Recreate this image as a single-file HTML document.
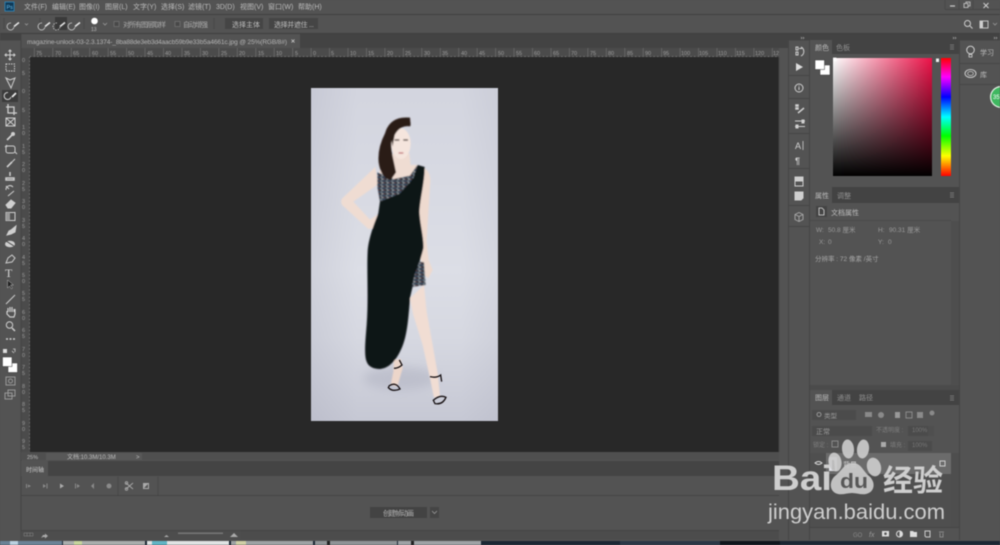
<!DOCTYPE html>
<html><head><meta charset="utf-8"><style>
html,body{margin:0;padding:0;background:#535353;width:1000px;height:545px;overflow:hidden}
svg{display:block;filter:blur(.55px)}
text{font-family:"Liberation Sans","Noto Sans CJK SC",sans-serif;fill:#bcbcbc;font-size:7px}
.d text{fill:#9c9c9c;font-size:5.5px}
.m text{fill:#9a9a9a;font-size:6.5px}
.i{fill:none;stroke:#cfcfcf;stroke-width:1}
.f{fill:#cfcfcf}
</style></head><body>
<svg width="1000" height="545" viewBox="0 0 1000 545" xmlns="http://www.w3.org/2000/svg">
<defs>
<linearGradient id="cw" x1="0" x2="1" y1="0" y2="0"><stop offset="0" stop-color="#fff"/><stop offset="1" stop-color="#ec1248"/></linearGradient>
<linearGradient id="cb" x1="0" x2="0" y1="0" y2="1"><stop offset="0" stop-color="#000" stop-opacity="0"/><stop offset="1" stop-color="#000"/></linearGradient>
<linearGradient id="hue" x1="0" x2="0" y1="0" y2="1"><stop offset="0" stop-color="#f00"/><stop offset=".16" stop-color="#f0f"/><stop offset=".33" stop-color="#00f"/><stop offset=".5" stop-color="#0ff"/><stop offset=".66" stop-color="#0f0"/><stop offset=".83" stop-color="#ff0"/><stop offset="1" stop-color="#f00"/></linearGradient>
<linearGradient id="bg" x1="0" x2="0" y1="0" y2="1"><stop offset="0" stop-color="#d3d5df"/><stop offset=".55" stop-color="#dcdee6"/><stop offset=".75" stop-color="#d6d8e1"/><stop offset="1" stop-color="#c6c8d4"/></linearGradient>
<linearGradient id="vg" x1="0" x2="1" y1="0" y2="0"><stop offset="0" stop-color="#8a8ca0" stop-opacity=".16"/><stop offset=".25" stop-color="#8a8ca0" stop-opacity="0"/><stop offset=".8" stop-color="#8a8ca0" stop-opacity="0"/><stop offset="1" stop-color="#8a8ca0" stop-opacity=".1"/></linearGradient>
<pattern id="seq" width="16" height="11" patternUnits="userSpaceOnUse"><rect width="16" height="11" fill="#2a3038"/><rect x="1" y="1" width="6" height="3" fill="#8fa0b0"/><rect x="9" y="0" width="6" height="3" fill="#3d5a78"/><rect x="4" y="6" width="6" height="3" fill="#c4c8cc"/><rect x="11" y="6" width="4" height="3" fill="#7a4a50"/></pattern>
<filter id="soft" x="-10%" y="-10%" width="120%" height="120%"><feGaussianBlur stdDeviation="1.6"/></filter>
<filter id="sh" x="-30%" y="-50%" width="160%" height="200%"><feGaussianBlur stdDeviation="14"/></filter>
</defs>

<rect width="1000" height="545" fill="#535353"/>
<!-- menu -->
<rect x="0" y="14" width="1000" height="1" fill="#404040"/>
<rect x="5" y="2" width="9" height="9" fill="#0e3a58" stroke="#2f8ac0" stroke-width=".8"/><text x="6.5" y="9" style="font-size:5.5px;fill:#6fc0ee">Ps</text>
<text x="24" y="9">文件(F)</text><text x="52" y="9">编辑(E)</text><text x="79" y="9">图像(I)</text><text x="105" y="9">图层(L)</text><text x="133" y="9">文字(Y)</text><text x="161" y="9">选择(S)</text><text x="188" y="9">滤镜(T)</text><text x="216" y="9">3D(D)</text><text x="240" y="9">视图(V)</text><text x="268" y="9">窗口(W)</text><text x="298" y="9">帮助(H)</text>
<path d="M945 0v9M959 0v9M973 0v9M945 9.5H1000" stroke="#474747" fill="none"/>
<path d="M950 6h5" stroke="#ccc" stroke-width="1.2"/><path d="M964 3.500h4v4h-4zM966 3.500v-1.500h4v4h-2" class="i" style="stroke-width:.8"/><path d="M983.500 3l5 5M988.500 3l-5 5" class="i"/>

<!-- options bar -->
<path d="M4 18v11M40 18v11M84 18v11M214 18v11" stroke="#474747"/>
<rect x="55" y="17" width="12" height="13" fill="#3a3a3a"/>
<g class="i" style="stroke-width:.8"><path d="M11 23a3.500 3.500 0 1 0 3 4"/>
<path d="M42 23a3.500 3.500 0 1 0 3 4"/>
<path d="M57 23a3.500 3.500 0 1 0 3 4" stroke-dasharray="1.500 1"/>
<path d="M72 23a3.500 3.500 0 1 0 3 4"/>
<path d="M25 23.500l1.500 1.500 1.500-1.500" style="stroke:#999"/></g>
<g stroke="#e4e4e4" stroke-width="1.600" fill="none"><path d="M14 26.500l5-4"/><path d="M45 26.500l5-4"/><path d="M60 26.500l5-4"/><path d="M75 26.500l5-4"/></g>
<circle cx="94.500" cy="21" r="3.300" fill="#fff"/><text x="91" y="31" style="font-size:5px">13</text>
<path d="M103 23l2 2 2-2" class="i" style="stroke:#999;stroke-width:.8"/>
<rect x="114" y="21.500" width="5" height="5" fill="#484848" stroke="#777" stroke-width=".7"/><text x="123" y="27" textLength="43" style="fill:#aaa">对所有图层取样</text>
<rect x="175" y="21.500" width="5" height="5" fill="#484848" stroke="#777" stroke-width=".7"/><text x="183" y="27" textLength="25" style="fill:#aaa">自动增强</text>
<rect x="225" y="18" width="38" height="11" fill="#454545"/><text x="232" y="27">选择主体</text>
<rect x="269" y="18" width="49" height="11" fill="#454545"/><text x="274" y="27" textLength="40">选择并遮住 ...</text>
<circle cx="967.500" cy="23.500" r="3" class="i"/><path d="M970 26l2.500 2.500" class="i"/>
<rect x="980" y="21" width="8" height="7" class="i" style="stroke-width:.9"/><rect x="980" y="21" width="3" height="7" class="f"/><path d="M993 23l2 2 2-2" class="i" style="stroke:#999;stroke-width:.8"/>

<!-- dark strips -->
<rect x="0" y="33" width="1000" height="1" fill="#3f3f3f"/>
<rect x="0" y="34" width="1000" height="6.500" fill="#434343"/>
<rect x="21" y="34" width="768" height="14" fill="#434343"/>
<rect x="21" y="34" width="279" height="14" fill="#535353"/>
<text x="27" y="44" textLength="260" style="font-size:6.500px;fill:#b4b4b4">magazine-unlock-03-2.3.1374-_8ba88de3eb3d4aacb59b9e33b5a4661c.jpg @ 25%(RGB/8#)</text>
<path d="M291.500 39.500l3 3M294.500 39.500l-3 3" stroke="#ccc" stroke-width=".8"/>
<path d="M3.500 36l1.500 1.500-1.500 1.500M6.500 36l1.500 1.500-1.500 1.500" stroke="#aaa" fill="none" stroke-width=".6"/>
<rect x="0" y="34" width="21" height="6.500" fill="#434343"/>

<!-- rulers -->
<rect x="21" y="48" width="758" height="9" fill="#4b4b4b"/>
<rect x="21" y="57" width="9" height="395" fill="#4b4b4b"/>
<path d="M30 56.500H779" stroke="#808080" stroke-width="1" stroke-dasharray="1 2.690"/>
<path d="M30 52.500H779" stroke="#6e6e6e" stroke-width="9" stroke-dasharray=".7 17.750" stroke-dashoffset="-4"/>
<g class="d">
<text x="36" y="55">75</text><text x="55" y="55">70</text><text x="73" y="55">65</text><text x="92" y="55">60</text><text x="110" y="55">55</text><text x="128" y="55">50</text><text x="147" y="55">45</text><text x="165" y="55">40</text><text x="184" y="55">35</text><text x="202" y="55">30</text><text x="221" y="55">25</text><text x="239" y="55">20</text><text x="258" y="55">15</text><text x="276" y="55">10</text><text x="295" y="55">5</text><text x="313" y="55">0</text><text x="331" y="55">5</text><text x="350" y="55">10</text><text x="368" y="55">15</text><text x="387" y="55">20</text><text x="405" y="55">25</text><text x="424" y="55">30</text><text x="442" y="55">35</text><text x="461" y="55">40</text><text x="479" y="55">45</text><text x="498" y="55">50</text><text x="516" y="55">55</text><text x="534" y="55">60</text><text x="553" y="55">65</text><text x="571" y="55">70</text><text x="590" y="55">75</text><text x="608" y="55">80</text><text x="627" y="55">85</text><text x="645" y="55">90</text><text x="663" y="55">95</text><text x="681" y="55">100</text><text x="699" y="55">105</text><text x="718" y="55">110</text><text x="736" y="55">115</text><text x="755" y="55">120</text><text x="773" y="55">12</text>
<text x="22" y="62">0</text><text x="22" y="75">5</text><text x="22" y="93">0</text><text x="22" y="112">5</text>
<text x="22" y="129">1</text><text x="22" y="135">0</text><text x="22" y="148">1</text><text x="22" y="154">5</text><text x="22" y="166">2</text><text x="22" y="172">0</text><text x="22" y="185">2</text><text x="22" y="191">5</text><text x="22" y="203">3</text><text x="22" y="209">0</text><text x="22" y="222">3</text><text x="22" y="228">5</text><text x="22" y="240">4</text><text x="22" y="246">0</text><text x="22" y="259">4</text><text x="22" y="265">5</text><text x="22" y="277">5</text><text x="22" y="283">0</text><text x="22" y="295">5</text><text x="22" y="301">5</text><text x="22" y="314">6</text><text x="22" y="320">0</text><text x="22" y="332">6</text><text x="22" y="338">5</text><text x="22" y="351">7</text><text x="22" y="357">0</text><text x="22" y="369">7</text><text x="22" y="375">5</text><text x="22" y="388">8</text><text x="22" y="394">0</text><text x="22" y="406">8</text><text x="22" y="412">5</text><text x="22" y="425">9</text><text x="22" y="431">0</text><text x="22" y="443">9</text><text x="22" y="449">5</text>
</g>
<path d="M29.500 57V452" stroke="#808080" stroke-dasharray="1 2.690"/>

<!-- canvas -->
<rect x="30" y="57" width="749" height="395" fill="#282828"/>
<rect x="311" y="88" width="187" height="333" fill="url(#bg)"/>
<rect x="311" y="88" width="187" height="333" fill="url(#vg)"/>
<!-- figure -->
<g transform="translate(300 85) scale(.3333)">
<ellipse cx="300" cy="880" rx="110" ry="35" fill="#a6a8b8" opacity=".4" filter="url(#sh)"/>
<g filter="url(#soft)">
<path d="M226 246L125 342Q120 358 133 366L205 432 252 424 259 396 232 390 210 404 160 350 234 298Z" fill="#efdcd2"/>
<path d="M362 246Q392 252 391 290L384 400 380 470 386 525 398 555 385 580 372 570 358 500 352 380Z" fill="#eedacf"/>
<path d="M330 640L372 600 380 680 398 780 414 870 420 935 402 938 390 880 368 780 340 690Z" fill="#f1ddd3"/>
<path d="M282 825L302 822 308 850 292 905 272 900 280 860Z" fill="#ecd6ca"/>
<path d="M280 205L328 205 332 240 352 240 340 280 300 300 236 262Z" fill="#efdcd2"/>
<path d="M232 262L282 282 330 272 352 240 342 280 300 325 240 350 232 305Z" fill="url(#seq)"/>
<path d="M353 240L374 246C374 290 360 340 358 380C360 420 372 460 370 490C360 530 340 590 330 640C325 700 322 760 300 800C285 830 265 850 240 852C220 852 205 845 200 830C192 810 196 770 200 720C206 640 200 560 203 500C205 460 225 410 235 385L240 350 300 325 340 280Z" fill="#0e1219"/>
<path d="M358 530L372 532 377 600 335 606 345 565Z" fill="url(#seq)"/>
<path d="M330 98Q270 92 255 145 232 190 236 232 244 282 272 285L288 262 278 215Q268 175 282 140 300 118 332 122Z" fill="#2c1c19"/>
<ellipse cx="303" cy="176" rx="29" ry="46" fill="#f5e5dd"/>
<path d="M272 150Q288 106 332 112L330 124Q300 120 284 150 280 168 278 185Z" fill="#2c1c19"/>
<path d="M284 165h14M310 165h14" stroke="#33231f" stroke-width="3.500"/><path d="M296 204h14" stroke="#b85a60" stroke-width="3.500"/>
</g>
<g fill="none" stroke="#1a1416" stroke-width="4"><path d="M268 902Q288 890 300 912 278 922 265 908z"/><path d="M282 850Q295 850 306 840L298 825"/><path d="M400 946Q420 928 438 937 428 960 405 956z"/><path d="M390 875Q410 880 422 870L425 890"/></g>
</g>
<path d="M779 57V452" stroke="#454545"/>

<!-- left toolbar -->
<rect x="20.500" y="34" width="1" height="506" fill="#454545"/>
<rect x="2" y="90" width="16" height="12" fill="#3b3b3b"/>
<g class="i">
<path d="M10 50v10M5 55h10M8.500 51.500L10 50l1.500 1.500M8.500 58.500L10 60l1.500-1.500M6.500 53.500L5 55l1.500 1.500M13.500 53.500L15 55l-1.500 1.500"/>
<rect x="6" y="64" width="8.500" height="7" stroke-dasharray="1.500 1"/>
<path d="M6 78l4 2 5-2-2 5-2 5-2-4z"/>
<path d="M8 92.500a3.500 3.500 0 1 0 3 4.500"/><path d="M12 97l4-4" stroke-width="1.800" style="stroke:#eee"/>
<path d="M8 104v9h9M6 107h8v8" stroke-width="1.300"/>
<rect x="6" y="118" width="9" height="8"/><path d="M6 118l9 8M15 118l-9 8"/>
<path d="M7 140l5-5" stroke-width="1.800"/><circle cx="13" cy="134" r="1.500" class="f"/>
<rect x="6" y="146" width="9" height="7" rx="2"/><path d="M5 147l2-2M15 152l2 2"/>
<path d="M7 167l5-5" stroke-width="1.600"/><path d="M12 162l3-3" stroke-width="1"/>
<path d="M10 172v4M6 178h8v2H6z" stroke-width="1.500"/>
<path d="M6 190a4 4 0 0 1 7-3M14 191l-6 5M6 186l3 3" />
<path d="M6 205l5-5 4 3-4 5H8z" class="f"/>
<rect x="6" y="212.500" width="9" height="8"/><rect x="6" y="212.500" width="4" height="8" fill="#999" stroke="none"/>
<path d="M7 235l2-4 2-1 5-4-1 6-4 2z" class="f"/>
<ellipse cx="10" cy="244" rx="4.500" ry="2.800" class="f"/><path d="M6 241l8 5" style="stroke:#444"/>
<path d="M6 263l2-5 4-3 3 3-3 4z"/>
</g>
<text x="5" y="277" style="font-size:12px;font-family:'Liberation Serif',serif;fill:#d4d4d4">T</text>
<path d="M7.500 280v8l2-2 2 3 1-1-2-3h3z" fill="#222" stroke="#bbb" stroke-width=".5"/>
<g class="i">
<path d="M6 304l9-9"/>
<path d="M7 311l0 3 3 3h4l1-3v-5M8 312v-4M10 312v-5M12 312v-5M14 312v-3" stroke-width="1.200"/>
<circle cx="9.500" cy="325" r="3.200"/><path d="M12 328l3 3" stroke-width="1.500"/>
<path d="M6 339h2M9.500 339h2M13 339h2" stroke-width="1.500"/>
<path d="M13 349h2v3M12 351l2 2" stroke-width=".8"/>
<rect x="6" y="377" width="9" height="8" style="stroke:#999"/><circle cx="10.500" cy="381" r="2" style="stroke:#999"/>
<rect x="8" y="390" width="7" height="6" style="stroke:#999"/><rect x="5" y="393" width="7" height="6" style="stroke:#999"/>
</g>
<rect x="3" y="349" width="4" height="4" fill="#ddd"/>
<rect x="8" y="363" width="9.500" height="9.500" fill="#fff" stroke="#333" stroke-width=".5"/>
<rect x="2.500" y="357" width="9.500" height="9.500" fill="#fff" stroke="#333" stroke-width=".5"/>

<!-- status -->
<rect x="21" y="452" width="758" height="8" fill="#4f4f4f"/>
<rect x="46" y="453" width="96" height="7" fill="#585858"/>
<text x="27" y="459" style="font-size:5.500px">25%</text><text x="67" y="459" style="font-size:6px">文档:10.3M/10.3M</text><text x="136" y="459" style="font-size:6px">&gt;</text>
<!-- timeline -->
<rect x="21" y="461" width="758" height="15" fill="#444"/>
<rect x="21" y="461" width="27" height="15" fill="#535353"/>
<text x="26" y="472" style="font-size:6px;fill:#ccc">时间轴</text>
<rect x="21" y="495" width="758" height="1" fill="#454545"/>
<path d="M118 477v18M158 477v18" stroke="#474747"/>
<g fill="#8a8a8a">
<path d="M26 484h1v4h-1zM28 484.500l3 1.500-3 1.500z"/><path d="M46 486l-3-2v4zM46.500 483.500h1v5h-1z"/><path d="M60 483.500l4 2.500-4 2.500z" fill="#aaa"/><path d="M75 483.500h1v5h-1zM77 484l3 2-3 2z"/><path d="M94 483l-3 3 3 3z"/><circle cx="109" cy="486" r="2.500"/>
</g>
<path d="M126 483l7 6M126 489l7-6" stroke="#aaa" stroke-width=".9"/><circle cx="126.500" cy="483" r="1.300" fill="none" stroke="#aaa" stroke-width=".8"/><circle cx="126.500" cy="489" r="1.300" fill="none" stroke="#aaa" stroke-width=".8"/>
<rect x="143" y="483" width="6" height="6" fill="#aaa"/><path d="M144 488h4v-4z" fill="#555"/>
<rect x="370" y="507" width="57" height="11" fill="#434343"/><text x="383" y="515.500" textLength="31" style="fill:#b4b4b4">创建帧动画</text>
<rect x="430" y="507" width="9" height="11" fill="#454545"/><path d="M432 511l2.500 2.500 2.500-2.500" stroke="#999" fill="none" stroke-width=".8"/>
<rect x="21" y="530" width="758" height="1" fill="#454545"/>
<rect x="21" y="531" width="220" height="9" fill="#4d4d4d"/><rect x="241" y="531" width="538" height="9" fill="#4c4c4c"/>
<path d="M24 533h9v3h-9zM27 533v3M30 533v3" stroke="#888" fill="none" stroke-width=".5"/>
<path d="M41 538l2-3h2v-1.500l3 2.500-3 2.500V537h-2z" fill="#aaa"/>
<path d="M164 537h5l-2.500-2z" fill="#aaa"/><rect x="178" y="532.500" width="45" height="1.500" fill="#777"/><path d="M230 537h8l-4-4z" fill="#aaa"/>
<!-- taskbar -->
<rect x="0" y="541" width="1000" height="4" fill="#1b2734"/>
<rect x="0" y="541" width="62" height="4" fill="#6a8296"/><rect x="10" y="541" width="8" height="4" fill="#b9d0e0"/>
<rect x="63" y="541" width="82" height="4" fill="#a9adac"/><rect x="74" y="541" width="8" height="4" fill="#c5d49c"/>
<rect x="147" y="541" width="82" height="4" fill="#dfe3e3"/><rect x="152" y="541" width="15" height="4" fill="#60b4c4"/>
<rect x="231" y="541" width="82" height="4" fill="#9da2a4"/><rect x="236" y="541" width="10" height="4" fill="#cfcfa6"/>
<rect x="315" y="541" width="82" height="4" fill="#8e9396"/><rect x="327" y="541" width="3" height="4" fill="#222"/>
<rect x="398" y="541" width="83" height="4" fill="#9ea2a5"/><rect x="411" y="541" width="3" height="4" fill="#222"/>
<rect x="620" y="541" width="100" height="4" fill="#2b3847"/><rect x="720" y="541" width="60" height="4" fill="#10161d"/>

<!-- right side -->
<path d="M788.500 40V540M809.500 40V540M959.500 40V540" stroke="#454545"/>
<path d="M789 75.500h20M789 98.500h20M789 133.500h20M789 168.500h20M789 205.500h20M789 226.500h20" stroke="#454545"/>
<path d="M801 37l1 1-1 1M803 37l1 1-1 1M953 37l1 1-1 1M955 37l1 1-1 1M994 37l1 1-1 1M996 37l1 1-1 1" stroke="#aaa" fill="none" stroke-width=".6"/>
<g class="i">
<path d="M796 47h2v3h-2zM796 52h2v3h-2zM801 47a5 5 0 0 1 0 9"/><path d="M799 48.500h3"/>
<circle cx="799" cy="88" r="4"/><path d="M799 87v3M799 85.500v.8"/>
<path d="M796 105h2v1h-2zM796 108h2v1h-2zM798 113l6-5" stroke-width="1.500"/>
<path d="M795 121h10M795 126.500h10"/><rect x="802" y="120" width="2" height="3" class="f"/><rect x="796" y="125" width="2" height="3" class="f"/>
<path d="M803 141v9" style="stroke-width:.8"/>
<rect x="795" y="177" width="8" height="9" style="stroke-width:1"/><rect x="796" y="178" width="6" height="3" class="f"/>
<path d="M795 192h8v6l-2 2h-6z" class="f"/>
<path d="M799 212.500l4 2v5l-4 2-4-2v-5zM795 214.500l4 2 4-2M799 216.500v5" style="stroke:#aaa;stroke-width:.9"/>
</g>
<path d="M796 63l7 4-7 4z" fill="#ddd"/>
<text x="795" y="149" style="font-size:9px;fill:#d4d4d4">A</text>
<text x="795" y="164" style="font-size:9px;fill:#ccc;font-weight:bold">¶</text>

<!-- color panel -->
<rect x="810" y="40" width="149" height="14" fill="#434343"/>
<rect x="810" y="40" width="22" height="14" fill="#535353"/>
<text x="815" y="50">颜色</text><text x="836" y="50" style="fill:#8f8f8f">色板</text>
<path d="M950 45h4M950 47h4M950 49h4" stroke="#888" stroke-width=".8"/>
<rect x="820" y="65" width="10" height="10" fill="#fff" stroke="#333" stroke-width=".5"/>
<rect x="815" y="60" width="9.500" height="9.500" fill="#fff" stroke="#333" stroke-width=".5"/>
<rect x="833" y="58" width="99" height="118" fill="url(#cw)"/><rect x="833" y="58" width="99" height="118" fill="url(#cb)"/>
<rect x="833.500" y="58" width="2.500" height="2.500" fill="none" stroke="#fff" stroke-width=".8"/>
<rect x="941" y="58" width="10" height="118" fill="url(#hue)"/>
<rect x="936" y="58.500" width="3" height="3.500" fill="#eee"/>

<!-- properties -->
<rect x="810" y="187" width="149" height="16" fill="#434343"/>
<rect x="810" y="187" width="22" height="16" fill="#535353"/>
<text x="815" y="198">属性</text><text x="837" y="198" style="fill:#8f8f8f">调整</text>
<path d="M950 193h4M950 195h4M950 197h4" stroke="#888" stroke-width=".8"/>
<rect x="810" y="220" width="141" height="1" fill="#4a4a4a"/>
<rect x="816" y="206" width="11" height="11" fill="#444"/><path d="M819 208h3l2 2v5h-5z" fill="none" stroke="#ddd" stroke-width=".8"/>
<text x="831" y="215">文档属性</text>
<rect x="951" y="221" width="8" height="164" fill="#4e4e4e"/>
<g class="m"><text x="816" y="232">W:</text><text x="828" y="232">50.8 厘米</text><text x="878" y="232">H:</text><text x="889" y="232">90.31 厘米</text>
<text x="819" y="244">X:</text><text x="828" y="244">0</text><text x="878" y="244">Y:</text><text x="888" y="244">0</text>
<text x="815" y="261" style="fill:#a8a8a8">分辨率 : 72 像素 /英寸</text></g>

<!-- layers -->
<rect x="810" y="385" width="149" height="5" fill="#4b4b4b"/>
<rect x="810" y="390" width="149" height="15" fill="#434343"/>
<rect x="810" y="390" width="22" height="15" fill="#535353"/>
<text x="815" y="400">图层</text><text x="837" y="400" style="fill:#8f8f8f">通道</text><text x="859" y="400" style="fill:#8f8f8f">路径</text>
<path d="M950 396h4M950 398h4M950 400h4" stroke="#888" stroke-width=".8"/>
<rect x="812" y="410" width="44" height="10" fill="#4b4b4b"/><text x="824" y="418" style="fill:#9a9a9a;font-size:6.500px">类型</text>
<circle cx="819" cy="414.500" r="2" fill="none" stroke="#aaa" stroke-width=".8"/>
<g fill="#8a8a8a"><rect x="865" y="412" width="7" height="5"/><circle cx="881" cy="415" r="3"/><rect x="895" y="412" width="5" height="6" fill="#999"/><rect x="906" y="412" width="6" height="6" fill="none" stroke="#8a8a8a"/><rect x="917" y="412" width="6" height="6"/><circle cx="932" cy="413" r="2.500"/></g>
<rect x="812" y="426" width="60" height="10" fill="#4b4b4b"/><text x="816" y="434" style="fill:#999">正常</text>
<text x="876" y="432" style="fill:#7f7f7f;font-size:6px">不透明度 :</text><rect x="908" y="426" width="24" height="10" fill="#4b4b4b"/><text x="912" y="432" style="fill:#777;font-size:6px">100%</text><rect x="928" y="426" width="6" height="10" fill="#4f4f4f"/>
<text x="813" y="447" style="fill:#7f7f7f;font-size:6px">锁定 :</text><rect x="832" y="441" width="6" height="6" fill="none" stroke="#888"/><rect x="881" y="442" width="5" height="5" fill="#aaa"/>
<text x="890" y="447" style="fill:#7f7f7f;font-size:6px">填充 :</text><rect x="908" y="441" width="24" height="10" fill="#4b4b4b"/><text x="912" y="447" style="fill:#777;font-size:6px">100%</text>
<rect x="810" y="453" width="141" height="74" fill="#4f4f4f"/>
<rect x="826" y="453" width="125" height="21" fill="#6b6b6b"/>
<rect x="829" y="457" width="8" height="14" fill="#dfe0e6"/><path d="M832 460h2l1 10h-3z" fill="#111"/>
<text x="843" y="467" style="fill:#ddd">背景</text><rect x="940" y="461" width="5" height="5" fill="none" stroke="#ccc"/>
<rect x="951" y="453" width="8" height="74" fill="#4e4e4e"/>
<path d="M810 527.500h149" stroke="#454545"/>
<path d="M815 463q3.500-3 7 0q-3.500 3-7 0z" fill="none" stroke="#ddd"/>
<g><text x="853" y="537" style="fill:#888;font-size:6px">GO</text><text x="869" y="537" style="fill:#999;font-style:italic;font-size:7px">fx</text>
<rect x="882" y="531" width="7" height="5.500" fill="#ddd"/><circle cx="885.500" cy="533.700" r="1.300" fill="#555"/>
<circle cx="899.500" cy="534" r="3" fill="none" stroke="#ddd"/><path d="M899.500 531a3 3 0 0 1 0 6z" fill="#ddd"/>
<path d="M910 531h3l1 1h3v5h-7z" fill="#ddd"/><path d="M925 531h5v6h-4l-1-1z" fill="none" stroke="#ccc"/><path d="M939 532h5M940 533v4h3v-4" fill="none" stroke="#888"/></g>

<!-- far right -->
<rect x="960" y="63" width="40" height="1" fill="#474747"/><rect x="960" y="84" width="40" height="1" fill="#474747"/>
<circle cx="970.500" cy="50" r="3.800" fill="none" stroke="#ddd" stroke-width=".9"/><path d="M969 54.500h3v2.500h-3z" fill="none" stroke="#ddd" stroke-width=".7"/>
<text x="980" y="55">学习</text><text x="980" y="77">库</text>
<ellipse cx="970.500" cy="73.500" rx="5.500" ry="4" fill="none" stroke="#ccc" stroke-width="1"/><ellipse cx="970.500" cy="73.500" rx="2.800" ry="2" fill="none" stroke="#ccc" stroke-width=".8"/>
<circle cx="1001" cy="97" r="11" fill="#e6f3e6"/><circle cx="1001" cy="97" r="9.800" fill="#3fb760"/><text x="993" y="99" style="fill:#fff;font-size:6px">35</text>

<!-- watermark -->
<g>
<g fill="#cbcbcb" opacity=".92">
<ellipse cx="835" cy="462" rx="6.500" ry="9.500" transform="rotate(-10 835 462)"/>
<ellipse cx="848" cy="449" rx="6" ry="9.500" transform="rotate(-5 848 449)"/>
<ellipse cx="863" cy="449" rx="6" ry="9.500" transform="rotate(8 863 449)"/>
<ellipse cx="874" cy="467" rx="7" ry="9.500" transform="rotate(-15 874 467)"/>
<path d="M853 463c8 0 10 8 16 13 7 6 6 16-3 18-5 1-9-1-14-1-5 0-9 2-14 1-9-2-9-13-3-18 7-5 9-13 18-13z"/>
</g>
<text x="772" y="490" textLength="60" lengthAdjust="spacingAndGlyphs" style="font-size:35px;font-weight:bold;fill:#cecece">Bai</text>
<text x="840" y="488" textLength="28" lengthAdjust="spacingAndGlyphs" style="font-size:20px;font-weight:bold;fill:#575757">du</text>
<text x="883" y="491" textLength="60" style="font-size:30px;font-weight:bold;fill:#cecece">经验</text>
<text x="768" y="519" textLength="177" lengthAdjust="spacingAndGlyphs" style="font-size:21.500px;fill:#cecece">jingyan.baidu.com</text>
</g>
</svg>
</body></html>
